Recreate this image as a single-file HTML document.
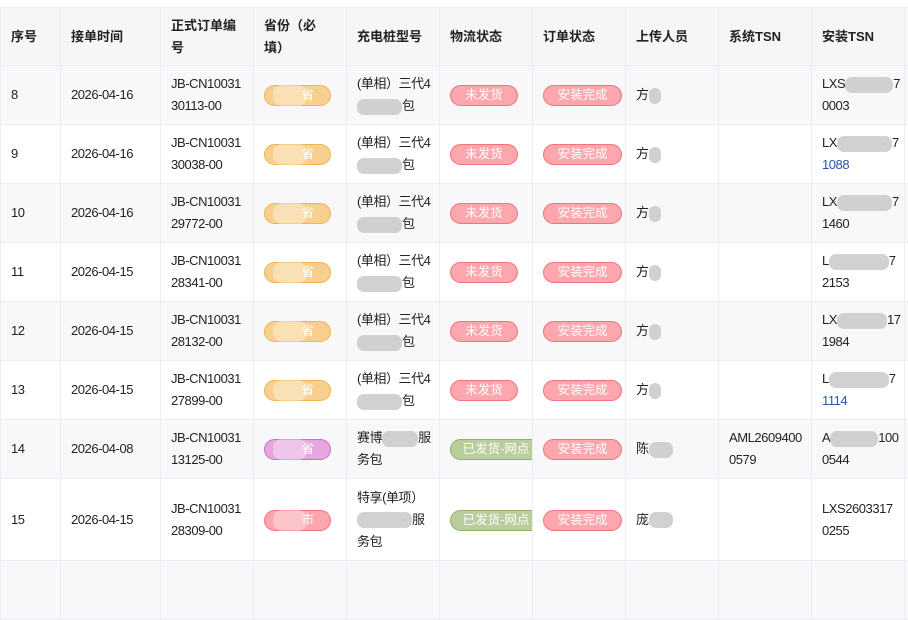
<!DOCTYPE html><html><head><meta charset="utf-8"><style>
body{margin:0;background:#fff;font-family:"Liberation Sans","Noto Sans CJK SC",sans-serif;font-size:13px;color:#222;width:908px;height:571px;overflow:hidden}
table{position:absolute;top:7px;left:0;border-collapse:collapse;table-layout:fixed;width:997px}
td,th{border:1px solid #ebeef5;padding:0 10px;text-align:left;vertical-align:middle;line-height:22px;overflow:hidden;white-space:nowrap;letter-spacing:-0.45px}
th{background:#f5f6f8;font-weight:bold;height:57px;color:#222;white-space:normal;letter-spacing:0}
tr.g td{background:#f8f8fa}
tr td{height:58px}
.tag{display:inline-block;height:19px;line-height:19px;border-radius:11px;border:1px solid;color:#fff;font-size:12.5px;text-align:center;vertical-align:middle;position:relative;letter-spacing:0}
.o{background:#f7cf8e;border-color:#efb551;width:65px}
.r{background:#fba7ad;border-color:#f2737b;width:66px}
.s{width:77px}
.gr{background:#b9ce9c;border-color:#8db26a;width:90px}
.p{background:#e6a7df;border-color:#cc6fc4;width:65px}
.bl{display:inline-block;background:#c5c5c9;height:16px;vertical-align:middle;border-radius:7px;opacity:.8}
.cover{position:absolute;left:8px;top:-1px;width:34px;height:21px;background:rgba(255,255,255,.35);border-radius:9px}
</style></head><body>
<table>
<colgroup><col style="width:60px"><col style="width:100px"><col style="width:93px"><col style="width:93px"><col style="width:93px"><col style="width:93px"><col style="width:93px"><col style="width:93px"><col style="width:93px"><col style="width:93px"><col style="width:93px"></colgroup>
<tr><th>序号</th><th>接单时间</th><th>正式订单编<br>号</th><th>省份（必<br>填）</th><th>充电桩型号</th><th>物流状态</th><th>订单状态</th><th>上传人员</th><th>系统TSN</th><th>安装TSN</th><th></th></tr>
<tr class="g"><td>8</td><td>2026-04-16</td><td>JB-CN10031<br>30113-00</td><td><span class="tag o"><span class="cover"></span>&nbsp;&nbsp;&nbsp;&nbsp;&nbsp;&nbsp;省</span></td><td>(单相）三代4<br><span class="bl" style="width:45px"></span>包</td><td><span class="tag r">未发货</span></td><td><span class="tag r s">安装完成</span></td><td>方<span class="bl" style="width:12px"></span></td><td></td><td>LXS<span class="bl" style="width:48px"></span>7<br>0003</td><td></td></tr>
<tr><td>9</td><td>2026-04-16</td><td>JB-CN10031<br>30038-00</td><td><span class="tag o"><span class="cover"></span>&nbsp;&nbsp;&nbsp;&nbsp;&nbsp;&nbsp;省</span></td><td>(单相）三代4<br><span class="bl" style="width:45px"></span>包</td><td><span class="tag r">未发货</span></td><td><span class="tag r s">安装完成</span></td><td>方<span class="bl" style="width:12px"></span></td><td></td><td>LX<span class="bl" style="width:55px"></span>7<br><span style="color:#2a55a5">1088</span></td><td></td></tr>
<tr class="g"><td>10</td><td>2026-04-16</td><td>JB-CN10031<br>29772-00</td><td><span class="tag o"><span class="cover"></span>&nbsp;&nbsp;&nbsp;&nbsp;&nbsp;&nbsp;省</span></td><td>(单相）三代4<br><span class="bl" style="width:45px"></span>包</td><td><span class="tag r">未发货</span></td><td><span class="tag r s">安装完成</span></td><td>方<span class="bl" style="width:12px"></span></td><td></td><td>LX<span class="bl" style="width:55px"></span>7<br>1460</td><td></td></tr>
<tr><td>11</td><td>2026-04-15</td><td>JB-CN10031<br>28341-00</td><td><span class="tag o"><span class="cover"></span>&nbsp;&nbsp;&nbsp;&nbsp;&nbsp;&nbsp;省</span></td><td>(单相）三代4<br><span class="bl" style="width:45px"></span>包</td><td><span class="tag r">未发货</span></td><td><span class="tag r s">安装完成</span></td><td>方<span class="bl" style="width:12px"></span></td><td></td><td>L<span class="bl" style="width:60px"></span>7<br>2153</td><td></td></tr>
<tr class="g"><td>12</td><td>2026-04-15</td><td>JB-CN10031<br>28132-00</td><td><span class="tag o"><span class="cover"></span>&nbsp;&nbsp;&nbsp;&nbsp;&nbsp;&nbsp;省</span></td><td>(单相）三代4<br><span class="bl" style="width:45px"></span>包</td><td><span class="tag r">未发货</span></td><td><span class="tag r s">安装完成</span></td><td>方<span class="bl" style="width:12px"></span></td><td></td><td>LX<span class="bl" style="width:50px"></span>17<br>1984</td><td></td></tr>
<tr><td>13</td><td>2026-04-15</td><td>JB-CN10031<br>27899-00</td><td><span class="tag o"><span class="cover"></span>&nbsp;&nbsp;&nbsp;&nbsp;&nbsp;&nbsp;省</span></td><td>(单相）三代4<br><span class="bl" style="width:45px"></span>包</td><td><span class="tag r">未发货</span></td><td><span class="tag r s">安装完成</span></td><td>方<span class="bl" style="width:12px"></span></td><td></td><td>L<span class="bl" style="width:60px"></span>7<br><span style="color:#2a55a5">1114</span></td><td></td></tr>
<tr class="g"><td>14</td><td>2026-04-08</td><td>JB-CN10031<br>13125-00</td><td><span class="tag p"><span class="cover"></span>&nbsp;&nbsp;&nbsp;&nbsp;&nbsp;&nbsp;省</span></td><td>赛博<span class="bl" style="width:36px"></span>服<br>务包</td><td><span class="tag gr">已发货-网点</span></td><td><span class="tag r s">安装完成</span></td><td>陈<span class="bl" style="width:24px"></span></td><td>AML2609400<br>0579</td><td>A<span class="bl" style="width:48px"></span>100<br>0544</td><td></td></tr>
<tr><td style="height:81px">15</td><td>2026-04-15</td><td>JB-CN10031<br>28309-00</td><td><span class="tag r" style="width:65px"><span class="cover"></span>&nbsp;&nbsp;&nbsp;&nbsp;&nbsp;&nbsp;市</span></td><td>特享(单项）<br><span class="bl" style="width:55px"></span>服<br>务包</td><td><span class="tag gr">已发货-网点</span></td><td><span class="tag r s">安装完成</span></td><td>庞<span class="bl" style="width:24px"></span></td><td></td><td>LXS2603317<br>0255</td><td></td></tr>
<tr class="g"><td></td><td></td><td></td><td></td><td></td><td></td><td></td><td></td><td></td><td></td><td></td></tr>
</table>
</body></html>
